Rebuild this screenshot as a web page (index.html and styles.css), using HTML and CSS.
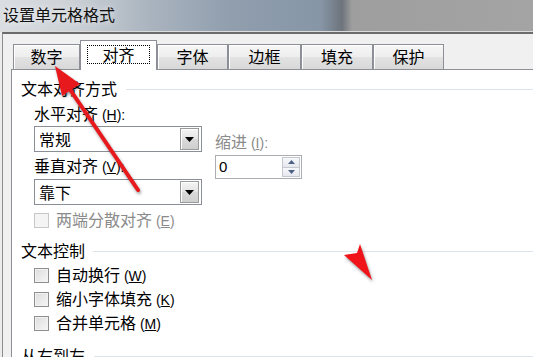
FILE: index.html
```html
<!DOCTYPE html>
<html lang="zh-CN">
<head>
<meta charset="utf-8">
<title>设置单元格格式</title>
<link rel="stylesheet" href="styles.css">
</head>
<body>
<div class="screen">
  <div class="titlebar">设置单元格格式</div>
  <div class="dialog">
    <div class="tabs">
      <div class="tab t1">数字</div>
      <div class="tab sel"><span class="focus">对齐</span></div>
      <div class="tab t3">字体</div>
      <div class="tab t4">边框</div>
      <div class="tab t5">填充</div>
      <div class="tab t6">保护</div>
    </div>
    <div class="panel">
      <div class="group-title g1"><span>文本对齐方式</span><i class="rule"></i></div>
      <div class="align-body">
        <div class="col-left">
          <div class="label l1">水平对齐<span class="key"> (<u>H</u>):</span></div>
          <div class="select s1">
            <span class="val">常规</span>
            <span class="drop"><svg width="9" height="5" viewBox="0 0 9 5"><path d="M0 0H9L4.5 5Z" fill="#000"/></svg></span>
          </div>
          <div class="label l2">垂直对齐<span class="key"> (<u>V</u>):</span></div>
          <div class="select s2">
            <span class="val">靠下</span>
            <span class="drop"><svg width="9" height="5" viewBox="0 0 9 5"><path d="M0 0H9L4.5 5Z" fill="#000"/></svg></span>
          </div>
        </div>
        <div class="col-right">
          <div class="label grey">缩进<span class="key"> (<u>I</u>):</span></div>
          <div class="spin">
            <span class="num">0</span>
            <span class="spin-btns">
              <span class="sb up"><svg width="7" height="4" viewBox="0 0 7 4"><path d="M0 4H7L3.5 0Z" fill="#4d6185"/></svg></span>
              <span class="sb down"><svg width="7" height="4" viewBox="0 0 7 4"><path d="M0 0H7L3.5 4Z" fill="#4d6185"/></svg></span>
            </span>
          </div>
        </div>
      </div>
      <div class="check disabled c0"><span class="box"></span><span class="txt">两端分散对齐<span class="key"> (<u>E</u>)</span></span></div>
      <div class="group-title g2"><span>文本控制</span><i class="rule"></i></div>
      <div class="checks">
        <div class="check"><span class="box"></span><span class="txt">自动换行<span class="key"> (<u>W</u>)</span></span></div>
        <div class="check"><span class="box"></span><span class="txt">缩小字体填充<span class="key"> (<u>K</u>)</span></span></div>
        <div class="check"><span class="box"></span><span class="txt">合并单元格<span class="key"> (<u>M</u>)</span></span></div>
      </div>
      <div class="group-title g3"><span>从右到左</span><i class="rule"></i></div>
    </div>
  </div>
  <svg class="marks" width="533" height="357" viewBox="0 0 533 357">
    <g class="arrow">
      <line x1="138" y1="190" x2="69" y2="88" stroke="#e8191c" stroke-width="4" stroke-linecap="round"/>
      <polygon points="55,66 80,84 62,96" fill="#e8191c"/>
    </g>
    <g class="arrow">
      <polygon points="344,255 357,253 360,244 372,280" fill="#f0141a"/>
    </g>
  </svg>
</div>
</body>
</html>
```

FILE: styles.css
```css
html, body {
  margin: 0;
  padding: 0;
}

body {
  background: #f0f0f0;
  font-family: "Noto Sans CJK SC", "Noto Sans", sans-serif;
  font-size: 16px;
  color: #000;
}

.screen {
  position: relative;
  width: 533px;
  height: 357px;
  overflow: hidden;
  background: #ececec;
}

.titlebar {
  height: 31px;
  line-height: 28px;
  padding-left: 3px;
  border-bottom: 1px solid #dcdcdc;
  background: linear-gradient(90deg, #dadee2 0, #cdd2d7 70px, #aab4bf 150px, #909eae 230px, #8796a7 320px, #6d747c 342px, #9e9e9e 352px, #a4a4a4 100%);
  color: #111;
  text-shadow: 0 0 6px rgba(255, 255, 255, 0.8);
}

.dialog {
  margin-left: 2px;
  border-left: 1px solid #8d8d8d;
  border-top: 2px solid #6b6b6b;
  background: #f0f0f0;
  padding-left: 8px;
  height: 323px;
  display: flex;
  flex-direction: column;
  overflow: hidden;
}

.tabs {
  flex-shrink: 0;
  display: flex;
  align-items: flex-end;
  height: 35px;
  padding-left: 2px;
  position: relative;
  z-index: 2;
}

.tab {
  flex-shrink: 0;
  box-sizing: border-box;
  height: 25px;
  border: 1px solid #8c8f96;
  border-bottom: none;
  background: linear-gradient(#f6f6f6, #eeeeee 50%, #e2e2e2 52%, #d8d8d8);
  box-shadow: inset 1px 1px 0 #ffffff;
  text-align: center;
  line-height: 23px;
  font-size: 16px;
}

.t1 { width: 67px; }
.t3 { width: 71px; }
.t4 { width: 73px; }
.t5 { width: 72px; }
.t6 { width: 71px; }

.tab.sel {
  width: 77px;
  height: 30px;
  margin-bottom: -1px;
  background: #ffffff;
  box-shadow: none;
  padding-top: 4px;
  line-height: 17px;
}

.focus {
  display: inline-block;
  box-sizing: border-box;
  width: 63px;
  height: 19px;
  border: 1px dotted #000;
}

.panel {
  flex: 1 0 auto;
  background: #ffffff;
  border: 1px solid #8c8f96;
  border-right: none;
  border-bottom: none;
  display: flex;
  flex-direction: column;
}

.panel > * {
  flex-shrink: 0;
}

.group-title {
  display: flex;
  align-items: center;
  height: 18px;
  line-height: 18px;
  padding-left: 9px;
  white-space: nowrap;
}

.rule {
  flex: 1;
  height: 1px;
  margin-left: 9px;
  margin-top: 2px;
  background: #dde3ea;
}

.g1 { margin-top: 9px; }
.g2 { margin-top: 12px; }
.g2 .rule { margin-left: 8px; }
.g3 { margin-top: 14px; }

.align-body {
  display: flex;
  padding-left: 22px;
}

.col-left {
  width: 168px;
  display: flex;
  flex-direction: column;
}

.col-right {
  margin-left: 13px;
  display: flex;
  flex-direction: column;
  padding-top: 35px;
}

.label {
  height: 18px;
  line-height: 18px;
  white-space: nowrap;
}

.key {
  font-family: "Liberation Sans", "DejaVu Sans", sans-serif;
  font-size: 14px;
}

.l1 { margin-top: 7px; }
.l2 { margin-top: 4px; }

.grey { color: #8b8b8b; }

.select {
  box-sizing: border-box;
  height: 26px;
  border: 1px solid #8a8f97;
  background: #ffffff;
  display: flex;
  align-items: center;
  padding: 1px 2px 1px 4px;
}

.s1 { margin-top: 4px; }
.s2 { margin-top: 5px; }

.val {
  flex: 1;
  line-height: 18px;
}

.drop {
  box-sizing: border-box;
  width: 19px;
  height: 22px;
  border: 1px solid #9a9a9a;
  background: linear-gradient(#f4f4f4, #e4e4e4 50%, #d9d9d9 52%, #cfcfcf);
  box-shadow: inset 1px 1px 0 #ffffff;
  display: flex;
  align-items: center;
  justify-content: center;
}

.spin {
  box-sizing: border-box;
  margin-top: 5px;
  width: 87px;
  height: 24px;
  border: 1px solid #abadb3;
  background: #ffffff;
  display: flex;
  align-items: stretch;
  padding: 1px;
}

.num {
  flex: 1;
  padding-left: 2px;
  font-family: "Liberation Sans", "DejaVu Sans", sans-serif;
  font-size: 15px;
  line-height: 20px;
}

.spin-btns {
  width: 18px;
  display: flex;
  flex-direction: column;
}

.sb {
  flex: 1;
  box-sizing: border-box;
  border: 1px solid #c3c7cf;
  background: linear-gradient(#f7f8fa, #e5e8ee);
  display: flex;
  align-items: center;
  justify-content: center;
}

.sb.down { border-top: none; }

.check {
  display: flex;
  align-items: center;
  height: 18px;
  line-height: 18px;
  padding-left: 22px;
  white-space: nowrap;
}

.box {
  box-sizing: border-box;
  width: 15px;
  height: 15px;
  margin-right: 7px;
  border: 1px solid #8e8f8f;
  background: linear-gradient(135deg, #dcdcdc, #f7f7f7);
  box-shadow: inset 0 0 0 1px #f2f2f2;
}

.check.disabled { color: #8b8b8b; }
.check.disabled .box {
  border-color: #c8c8c8;
  background: #f4f4f4;
  box-shadow: none;
}

.c0 { margin-top: 6px; }

.checks {
  display: flex;
  flex-direction: column;
  gap: 6px;
  margin-top: 7px;
}

.marks {
  position: absolute;
  left: 0;
  top: 0;
  pointer-events: none;
  z-index: 5;
}

.arrow {
  filter: drop-shadow(1px 2px 1.5px rgba(0, 0, 0, 0.4));
}
```
